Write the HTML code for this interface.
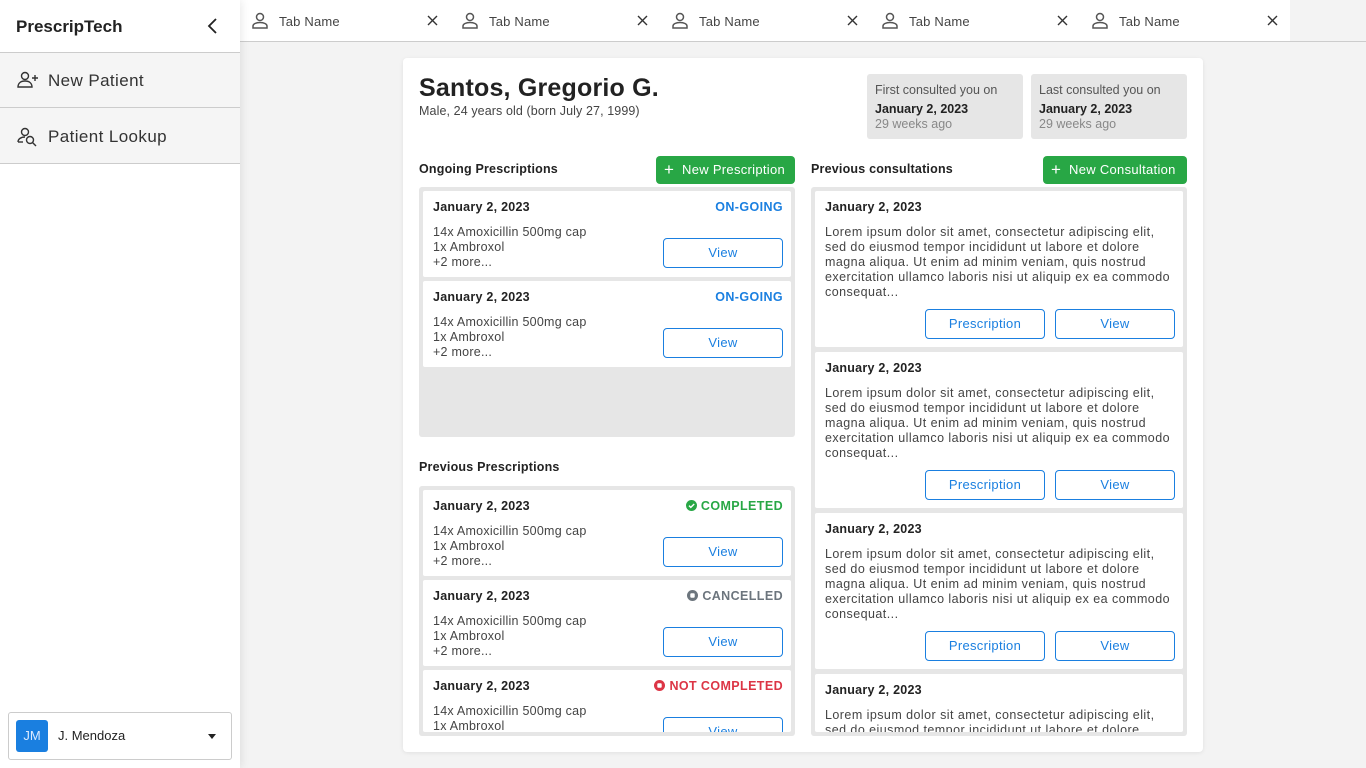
<!DOCTYPE html>
<html><head><meta charset="utf-8"><style>
*{box-sizing:border-box;margin:0;padding:0}
html{width:1366px;height:768px;overflow:hidden}
body{width:1366px;height:768px;overflow:hidden;background:#f3f3f3;font-family:"Liberation Sans",sans-serif;color:#333;position:relative}
.a{position:absolute;white-space:nowrap}
.side{position:absolute;left:0;top:0;width:240px;height:768px;background:#fff;box-shadow:2px 0 8px rgba(0,0,0,.08);z-index:2}
.nav{position:absolute;left:0;width:240px;height:55px;background:#f5f5f5;border-top:1px solid #ccc;font-size:17px;color:#333;letter-spacing:.4px}
.tab{position:absolute;top:0;width:210px;height:41px;background:#fff;font-size:13px;color:#444;letter-spacing:.2px}
.card{position:absolute;left:403px;top:58px;width:800px;height:694px;background:#fff;border-radius:4px;box-shadow:0 1px 4px rgba(0,0,0,.08)}
.box{position:absolute;background:#e6e6e6;border-radius:3px}
.it{position:absolute;background:#fff;border-radius:2px;font-size:12.5px;color:#444;letter-spacing:.25px;overflow:hidden}
.it b{position:absolute;left:10px;top:9px;color:#222;font-size:12.5px}
.btn{position:absolute;width:120px;height:30px;border:1px solid #1a7fe0;border-radius:4px;color:#1a7fe0;font-size:13px;text-align:center;line-height:28px;letter-spacing:.3px}
.g{position:absolute;background:#28a745;color:#fff;border-radius:4px;font-size:13px;height:28px;line-height:28px;letter-spacing:.3px}
.h{position:absolute;font-size:12.5px;font-weight:bold;color:#222;letter-spacing:.2px}
.st{position:absolute;right:8px;top:9px;font-size:12.5px;font-weight:bold;letter-spacing:.4px}
.dx{position:absolute;left:10px;top:34px;line-height:15px}
.lx{position:absolute;left:10px;top:34px;line-height:15px;letter-spacing:.45px}
</style></head><body>
<div class="side">
 <div class="a" style="left:16px;top:17px;font-size:17px;font-weight:bold;color:#222">PrescripTech</div>
 <svg class="a" style="left:206px;top:18px" width="14" height="16"><path d="M10 1L3 8l7 7" fill="none" stroke="#222" stroke-width="1.8"/></svg>
 <div class="nav" style="top:52px"><svg class="a" style="left:17px;top:18px" width="24" height="18" fill="none" stroke="#333" stroke-width="1.4"><circle cx="8" cy="5" r="3.5"/><path d="M1 16c0-4 3-6 7-6s7 2 7 6z"/><path d="M18 4v6M15 7h6"/></svg><span class="a" style="left:48px;top:18px">New Patient</span></div>
 <div class="nav" style="top:107px;border-bottom:1px solid #ccc;height:57px"><svg class="a" style="left:17px;top:19px" width="24" height="20" fill="none" stroke="#333" stroke-width="1.4"><circle cx="8" cy="5" r="3.5"/><path d="M1 15c0-3 3-5 7-5"/><path d="M1 15h5"/><circle cx="13" cy="13" r="3.5"/><path d="M15.5 15.5L19 19"/></svg><span class="a" style="left:48px;top:19px">Patient Lookup</span></div>
 <div class="a" style="left:8px;top:712px;width:224px;height:48px;border:1px solid #ccc;border-radius:3px">
  <div class="a" style="left:7px;top:7px;width:32px;height:32px;background:#1a7fe0;border-radius:3px;color:#dbe9ff;font-size:13px;text-align:center;line-height:32px">JM</div>
  <div class="a" style="left:49px;top:15px;font-size:13px;color:#222">J. Mendoza</div>
  <div class="a" style="left:199px;top:21px;border:4px solid transparent;border-top:5px solid #222;border-bottom:0"></div>
 </div>
</div>
<div class="a" style="left:240px;top:41px;width:1126px;height:1px;background:#ccc"></div>
<div class="tab" style="left:240px"></div><div class="tab" style="left:450px"></div><div class="tab" style="left:660px"></div><div class="tab" style="left:870px"></div><div class="tab" style="left:1080px"></div>
<div id="tabs"></div>
<script>
var t='';for(var i=0;i<5;i++){var x=240+i*210;t+='<svg class="a" style="left:'+(x+11)+'px;top:12px" width="18" height="17" fill="none" stroke="#555" stroke-width="1.5"><circle cx="9" cy="5" r="3.5"/><path d="M2 16v-2c0-2 3-3.5 7-3.5s7 1.5 7 3.5v2z"/></svg><span class="a" style="left:'+(x+39)+'px;top:14px;font-size:13px;color:#444;letter-spacing:.2px">Tab Name</span><svg class="a" style="left:'+(x+187)+'px;top:15px" width="11" height="11" stroke="#333" stroke-width="1.4"><path d="M1 1l9 9M10 1l-9 9"/></svg>';}
document.getElementById('tabs').innerHTML=t;
</script>
<div class="card"></div>
<div class="a" style="left:419px;top:74px;font-size:25px;font-weight:bold;color:#222;letter-spacing:.2px">Santos, Gregorio G.</div>
<div class="a" style="left:419px;top:104px;font-size:12.5px;color:#444;letter-spacing:.1px">Male, 24 years old (born July 27, 1999)</div>
<div class="a" style="left:867px;top:74px;width:156px;height:65px;background:#e6e6e6;border-radius:3px;font-size:12.5px;line-height:17px;padding:8px">
<div style="color:#555">First consulted you on</div><div style="font-weight:bold;color:#222;margin-top:2px">January 2, 2023</div><div style="color:#888;margin-top:-2px">29 weeks ago</div></div>
<div class="a" style="left:1031px;top:74px;width:156px;height:65px;background:#e6e6e6;border-radius:3px;font-size:12.5px;line-height:17px;padding:8px">
<div style="color:#555">Last consulted you on</div><div style="font-weight:bold;color:#222;margin-top:2px">January 2, 2023</div><div style="color:#888;margin-top:-2px">29 weeks ago</div></div>

<div class="h" style="left:419px;top:162px">Ongoing Prescriptions</div>
<div class="g" style="left:656px;top:156px;width:139px"><span style="position:absolute;left:8px;font-size:17px">+</span><span style="position:absolute;left:26px">New Prescription</span></div>
<div class="h" style="left:811px;top:162px">Previous consultations</div>
<div class="g" style="left:1043px;top:156px;width:144px"><span style="position:absolute;left:8px;font-size:17px">+</span><span style="position:absolute;left:26px">New Consultation</span></div>

<div class="box" style="left:419px;top:187px;width:376px;height:250px"></div>
<div class="h" style="left:419px;top:460px">Previous Prescriptions</div>
<div class="box" style="left:419px;top:486px;width:376px;height:250px"></div>
<div class="box" style="left:811px;top:187px;width:376px;height:549px"></div>
<div id="items"></div>
<script>
var h='';
var rx=[[191,'ON-GOING','#1a7fe0',''],[281,'ON-GOING','#1a7fe0',''],[490,'COMPLETED','#28a745','c'],[580,'CANCELLED','#6c757d','s'],[670,'NOT COMPLETED','#dc3545','s']];
rx.forEach(function(r){var y=r[0];var ht=y==670?62:86;
var ic='';if(r[3]=='c')ic='<svg width="11" height="11" style="vertical-align:-1px;margin-right:4px"><circle cx="5.5" cy="5.5" r="5.5" fill="'+r[2]+'"/><path d="M3 5.6l1.8 1.8L8.2 4" stroke="#fff" stroke-width="1.4" fill="none"/></svg>';
if(r[3]=='s')ic='<svg width="11" height="11" style="vertical-align:-1px;margin-right:4px"><circle cx="5.5" cy="5.5" r="5.5" fill="'+r[2]+'"/><rect x="3.3" y="3.3" width="4.4" height="4.4" rx="1" fill="#fff"/></svg>';
h+='<div class="it" style="left:423px;top:'+y+'px;width:368px;height:'+ht+'px"><b>January 2, 2023</b><span class="st" style="color:'+r[2]+'">'+ic+r[1]+'</span><div class="dx">14x Amoxicillin 500mg cap<br>1x Ambroxol<br>+2 more...</div><div class="btn" style="left:240px;top:47px">View</div></div>';});
[191,352,513,674].forEach(function(y){var ht=y==674?58:156;
h+='<div class="it" style="left:815px;top:'+y+'px;width:368px;height:'+ht+'px"><b>January 2, 2023</b><div class="lx">Lorem ipsum dolor sit amet, consectetur adipiscing elit,<br>sed do eiusmod tempor incididunt ut labore et dolore<br>magna aliqua. Ut enim ad minim veniam, quis nostrud<br>exercitation ullamco laboris nisi ut aliquip ex ea commodo<br>consequat...</div><div class="btn" style="left:110px;top:118px">Prescription</div><div class="btn" style="left:240px;top:118px">View</div></div>';});
document.getElementById('items').innerHTML=h;
</script>
</body></html>
